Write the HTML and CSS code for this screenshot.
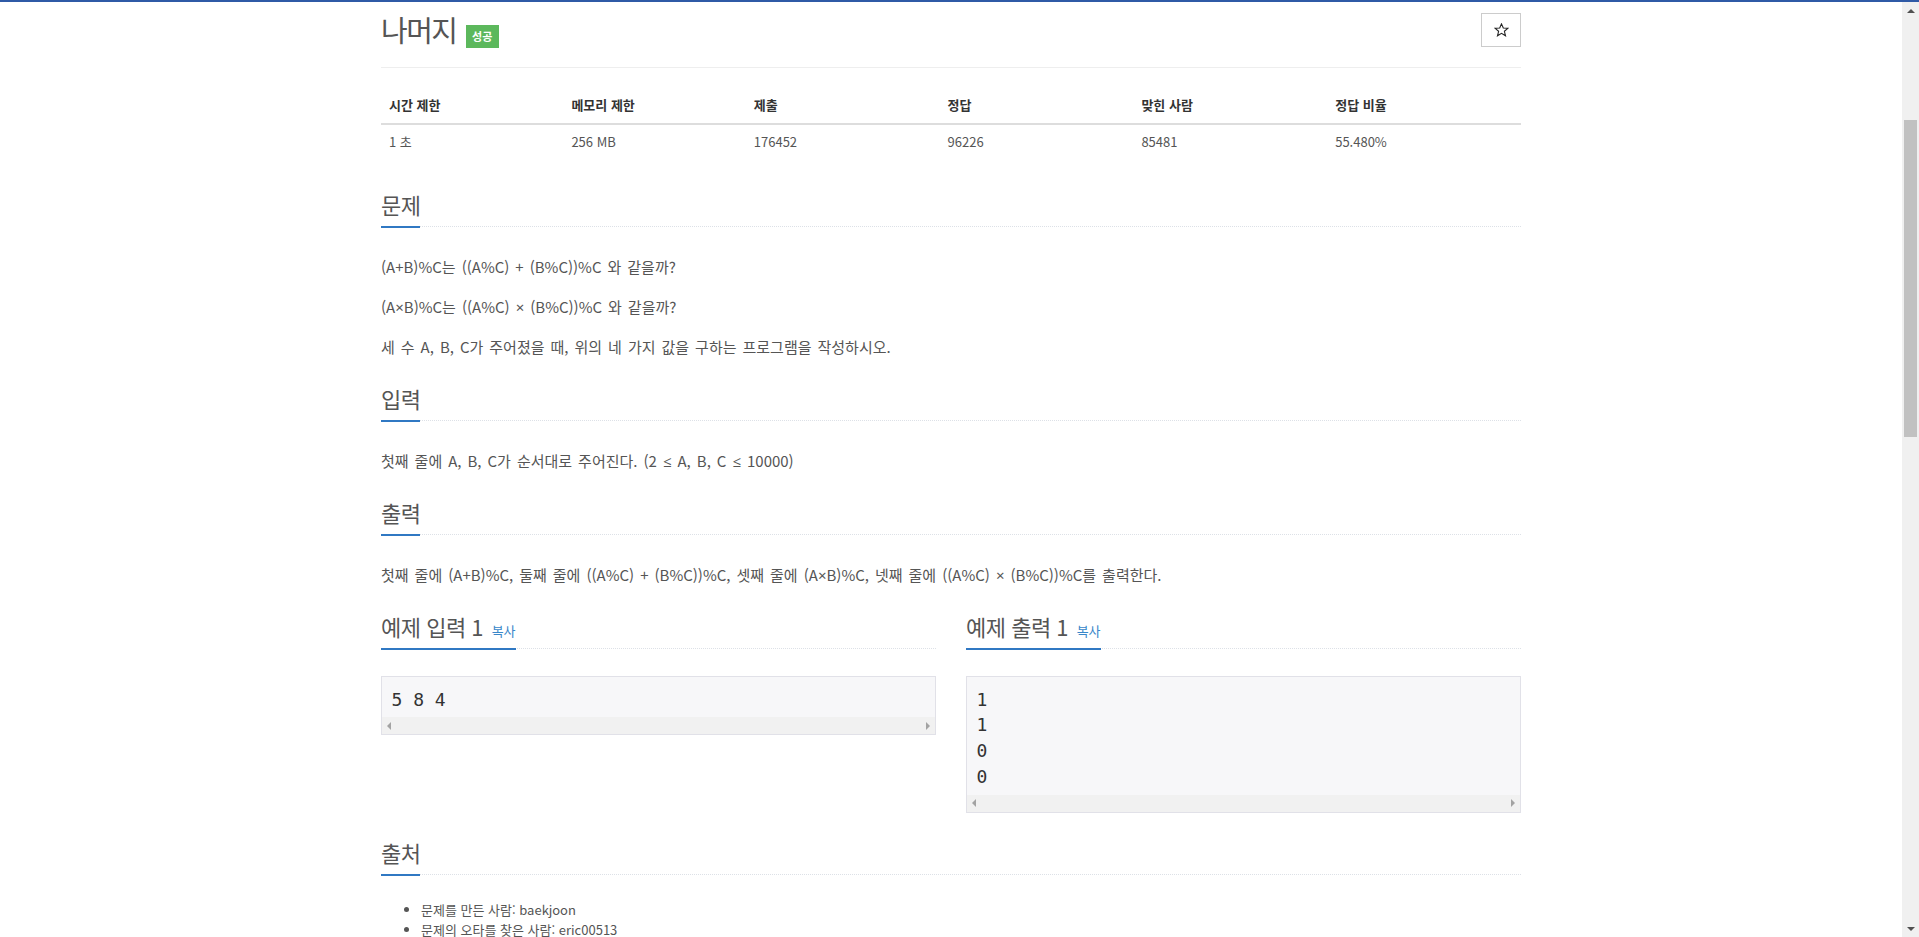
FILE: index.html
```html
<!DOCTYPE html>
<html lang="ko">
<head>
<meta charset="utf-8">
<title>나머지</title>
<link rel="stylesheet" href="styles.css">
</head>
<body>
<div class="topline"></div>
<div class="frame">
  <main class="page">
    <div class="container">
      <div class="problem-header">
        <h1 class="problem-title">나머지</h1>
        <span class="label-ac">성공</span>
        <button class="star-btn" type="button" aria-label="즐겨찾기">
          <svg width="15" height="14" viewBox="0 0 15 14"><polygon points="7.5,0.9 9.3,5 13.8,5.3 10.4,8.3 11.5,12.8 7.5,10.4 3.5,12.8 4.6,8.3 1.2,5.3 5.7,5" fill="none" stroke="#222" stroke-width="1.1" stroke-linejoin="miter"/></svg>
        </button>
      </div>

      <table class="info-table">
        <thead>
          <tr>
            <th class="w16">시간 제한</th>
            <th class="w16">메모리 제한</th>
            <th class="w17">제출</th>
            <th class="w17">정답</th>
            <th class="w17">맞힌 사람</th>
            <th class="w17">정답 비율</th>
          </tr>
        </thead>
        <tbody>
          <tr>
            <td>1 초</td>
            <td>256 MB</td>
            <td>176452</td>
            <td>96226</td>
            <td>85481</td>
            <td>55.480%</td>
          </tr>
        </tbody>
      </table>

      <section class="section">
        <div class="headline"><h2>문제</h2></div>
        <p>(A+B)%C는 ((A%C) + (B%C))%C 와 같을까?</p>
        <p>(A<span class="sym">×</span>B)%C는 ((A%C) <span class="sym">×</span> (B%C))%C 와 같을까?</p>
        <p>세 수 A, B, C가 주어졌을 때, 위의 네 가지 값을 구하는 프로그램을 작성하시오.</p>
      </section>

      <section class="section">
        <div class="headline"><h2>입력</h2></div>
        <p>첫째 줄에 A, B, C가 순서대로 주어진다. (2 <span class="sym">≤</span> A, B, C <span class="sym">≤</span> 10000)</p>
      </section>

      <section class="section">
        <div class="headline"><h2>출력</h2></div>
        <p>첫째 줄에 (A+B)%C, 둘째 줄에 ((A%C) + (B%C))%C, 셋째 줄에 (A<span class="sym">×</span>B)%C, 넷째 줄에 ((A%C) <span class="sym">×</span> (B%C))%C를 출력한다.</p>
      </section>

      <section class="section sample-row">
        <div class="sample-col">
          <div class="headline sample-headline"><h2>예제 입력 1 <a class="copy" href="#">복사</a></h2></div>
          <div class="sample-box">
            <pre class="sampledata">5 8 4</pre>
            <div class="hscroll"><span class="arr-left"></span><span class="arr-right"></span></div>
          </div>
        </div>
        <div class="sample-col">
          <div class="headline sample-headline"><h2>예제 출력 1 <a class="copy" href="#">복사</a></h2></div>
          <div class="sample-box">
            <pre class="sampledata">1
1
0
0</pre>
            <div class="hscroll"><span class="arr-left"></span><span class="arr-right"></span></div>
          </div>
        </div>
      </section>

      <section class="section">
        <div class="headline"><h2>출처</h2></div>
        <ul class="source-list">
          <li>문제를 만든 사람: <a href="#">baekjoon</a></li>
          <li>문제의 오타를 찾은 사람: <a href="#">eric00513</a></li>
        </ul>
      </section>
    </div>
  </main>
  <div class="vscroll">
    <div class="vbtn"><span class="arr-up"></span></div>
    <div class="vtrack"><div class="vthumb"></div></div>
    <div class="vbtn"><span class="arr-down"></span></div>
  </div>
</div>
</body>
</html>
```

FILE: styles.css
```css
* { box-sizing: border-box; }

html, body {
  margin: 0;
  padding: 0;
  height: 937px;
  overflow: hidden;
  background: #fff;
}

body {
  font-family: "Noto Sans CJK KR", "Noto Sans", sans-serif;
  font-size: 13px;
  color: #555;
  display: flex;
  flex-direction: column;
}

.topline {
  height: 2px;
  background: #2f5aa6;
  flex: none;
}

.frame {
  flex: 1;
  display: flex;
  min-height: 0;
}

.page {
  flex: 1;
  min-width: 0;
  overflow: hidden;
}

.container {
  width: 1140px;
  margin: 0 auto;
  display: flex;
  flex-direction: column;
}

/* header */
.problem-header {
  display: flex;
  align-items: flex-start;
  padding: 10px 0 19px;
  border-bottom: 1px solid #eee;
}

.problem-title {
  margin: 0;
  font-size: 29px;
  line-height: 34px;
  font-weight: 400;
  letter-spacing: -1.5px;
  color: #555;
}

.label-ac {
  margin: 13px 0 0 9px;
  background: #5cb85c;
  color: #fff;
  font-size: 11px;
  font-weight: 700;
  line-height: 23px;
  height: 23px;
  padding: 0 6.5px;
}

.star-btn {
  margin: 1px 0 0 auto;
  width: 40px;
  height: 34px;
  border: 1px solid #ccc;
  background: #fff;
  padding: 0;
  display: flex;
  align-items: center;
  justify-content: center;
}

/* table */
.info-table {
  width: 100%;
  border-collapse: collapse;
  margin: 20px 0 30px;
  font-size: 13px;
  line-height: 18.6px;
}

.info-table th {
  text-align: left;
  padding: 8px;
  color: #333;
  font-weight: 700;
  border-bottom: 2px solid #ddd;
}

.info-table td {
  padding: 8px;
  color: #555;
}

.w16 { width: 16%; }
.w17 { width: 17%; }

/* sections */
.section {
  margin-bottom: 11px;
}

.headline {
  display: flex;
  align-items: flex-end;
  border-bottom: 1px dotted #dde1e7;
  margin-bottom: 25px;
}

.sample-headline {
  margin-bottom: 27px;
}

.headline h2 {
  margin: 0 0 -2px;
  font-size: 22px;
  line-height: 30px;
  font-weight: 400;
  color: #555;
  padding-bottom: 7px;
  border-bottom: 2px solid #3078c3;
  letter-spacing: -0.5px;
}

.section p {
  margin: 0 0 10px;
  font-size: 15px;
  line-height: 30px;
  word-spacing: 1.8px;
  color: #555;
}

.sym {
  font-family: "Noto Sans", "Open Sans", sans-serif;
}

.copy {
  font-size: 13px;
  line-height: 1;
  color: #3a87c9;
  text-decoration: none;
  letter-spacing: 0;
  margin-left: 3px;
}

/* samples */
.sample-row {
  display: flex;
  gap: 30px;
}

.sample-col {
  flex: 1;
  min-width: 0;
}

.sample-box {
  border: 1px solid #e1e1e8;
  background: #f7f7f9;
  margin-bottom: 13px;
}

.sampledata {
  margin: 0;
  padding: 9.5px 9.5px 5px;
  font-family: "DejaVu Sans Mono", "Liberation Mono", monospace;
  font-size: 18px;
  line-height: 25.7px;
  color: #333;
}

.hscroll {
  height: 17px;
  background: #f1f1f1;
  display: flex;
  align-items: center;
  justify-content: space-between;
  padding: 0 5px;
}

.arr-left {
  width: 0;
  height: 0;
  border-top: 4px solid transparent;
  border-bottom: 4px solid transparent;
  border-right: 4px solid #a3a3a3;
}

.arr-right {
  width: 0;
  height: 0;
  border-top: 4px solid transparent;
  border-bottom: 4px solid transparent;
  border-left: 4px solid #a3a3a3;
}

/* source */
.source-list {
  margin: 0;
  padding-left: 40px;
  font-size: 13px;
  line-height: 20px;
}

.source-list a {
  color: #555;
  text-decoration: none;
}

/* page scrollbar */
.vscroll {
  width: 17px;
  flex: none;
  background: #f0f0f0;
  display: flex;
  flex-direction: column;
}

.vbtn {
  height: 17px;
  flex: none;
  display: flex;
  align-items: center;
  justify-content: center;
}

.arr-up {
  width: 0;
  height: 0;
  border-left: 4px solid transparent;
  border-right: 4px solid transparent;
  border-bottom: 4px solid #505050;
}

.arr-down {
  width: 0;
  height: 0;
  border-left: 4px solid transparent;
  border-right: 4px solid transparent;
  border-top: 4px solid #505050;
}

.vtrack {
  flex: 1;
  padding: 0 2px;
}

.vthumb {
  margin-top: 101px;
  height: 317px;
  background: #c1c1c1;
}
```
